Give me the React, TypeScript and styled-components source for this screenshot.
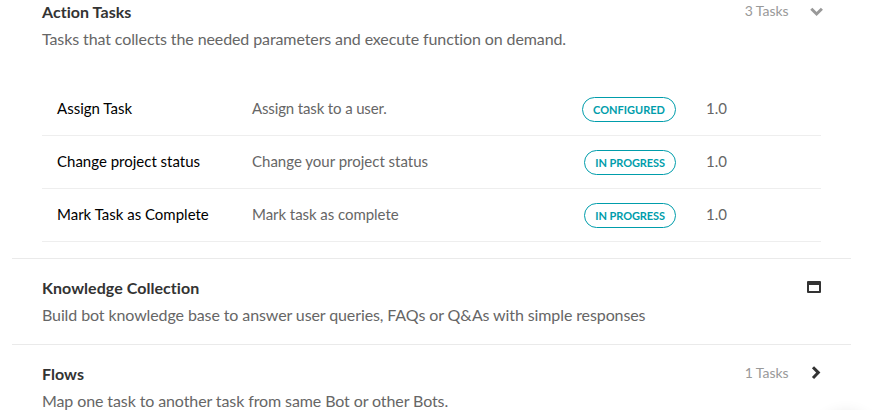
import React from "react";
import styled, { createGlobalStyle } from "styled-components";

const GlobalStyle = createGlobalStyle`
  * { box-sizing: border-box; }
  html, body { margin: 0; background: #fff; }
  body {
    font-family: Lato, sans-serif;
    font-variant-ligatures: none;
    overflow: hidden;
  }
`;

const Page = styled.main`
  position: relative;
  width: 893px;
  height: 410px;
  overflow: hidden;
  background: #fff;
`;

const SectionList = styled.div`
  width: 839px;
  margin: -18px 0 0 12px;
`;

const Section = styled.section`
  padding: 0 30px;
  border-top: 1px solid #eaeaea;
`;

const SectionHead = styled.header`
  display: flex;
  justify-content: space-between;
  height: 85px;
  padding-top: 18px;
`;

const Title = styled.h2`
  margin: 0;
  font-size: 16px;
  line-height: 22px;
  font-weight: 700;
  letter-spacing: 0.05px;
  color: #333;
`;

const Description = styled.p`
  margin: 5px 0 0;
  font-size: 16px;
  line-height: 22px;
  letter-spacing: -0.105px;
  color: #666;
  white-space: nowrap;
`;

const Aside = styled.div`
  display: flex;
  align-items: center;
  justify-content: flex-end;
  height: 20px;
`;

const Count = styled.span`
  margin-right: 12.5px;
  font-size: 14px;
  line-height: 20px;
  letter-spacing: -0.05px;
  color: #999;
`;

const Icon = styled.svg`
  display: block;
  width: 20px;
  height: 20px;
  overflow: visible;
`;

const TaskList = styled.ul`
  margin: 0;
  padding: 15px 0 16px;
  list-style: none;
`;

const TaskRow = styled.li`
  display: grid;
  grid-template-columns: 195px 300px 124px 1fr;
  align-items: center;
  height: 53px;
  padding: 0 0 2px 15px;
  border-bottom: 1px solid #eee;
  font-size: 15px;
  line-height: 20px;
  color: #666;
`;

const TaskName = styled.span`
  color: #000;
`;

const TaskDetail = styled.span<{ $tracking?: number }>`
  letter-spacing: ${(p) => p.$tracking ?? 0}px;
`;

const StatusCell = styled.div`
  display: flex;
  justify-content: flex-end;
`;

const Badge = styled.span<{ $tracking?: number }>`
  height: 25px;
  margin-top: 3px;
  padding: 0 10px;
  border: 1px solid #009dab;
  border-radius: 13px;
  font-size: 11px;
  line-height: 24px;
  font-weight: 700;
  letter-spacing: ${(p) => p.$tracking ?? 0}px;
  color: #009dab;
  white-space: nowrap;
`;

const Version = styled.span`
  padding-left: 30px;
`;

const FloatingShadow = styled.div`
  position: absolute;
  left: 818px;
  top: 414px;
  width: 56px;
  height: 56px;
  border-radius: 50%;
  box-shadow: 0 0 16px rgba(0, 0, 0, 0.12);
`;

type IconKind = "down" | "window" | "right";

function SectionIcon({ kind }: { kind: IconKind }) {
  return (
    <Icon viewBox="0 0 20 20" aria-hidden="true">
      {kind === "down" && (
        <path d="M10.3 7.8L15.6 13L20.9 7.8" fill="none" stroke="#999" strokeWidth="3" />
      )}
      {kind === "window" && (
        <path
          fillRule="evenodd"
          fill="#333"
          d="M7 4h12a1 1 0 0 1 1 1v10a1 1 0 0 1-1 1H7a1 1 0 0 1-1-1V5a1 1 0 0 1 1-1zM8 8v6h10V8z"
        />
      )}
      {kind === "right" && (
        <path d="M12 4.2L17.3 9.6L12 15" fill="none" stroke="#333" strokeWidth="3" />
      )}
    </Icon>
  );
}

interface Task {
  name: string;
  detail: string;
  detailTracking?: number;
  status: string;
  version: string;
}

interface SectionData {
  title: string;
  description: string;
  count?: string;
  icon: IconKind;
  tasks?: Task[];
}

const sections: SectionData[] = [
  {
    title: "Action Tasks",
    description: "Tasks that collects the needed parameters and execute function on demand.",
    count: "3 Tasks",
    icon: "down",
    tasks: [
      { name: "Assign Task", detail: "Assign task to a user.", detailTracking: -0.14, status: "CONFIGURED", version: "1.0" },
      { name: "Change project status", detail: "Change your project status", status: "IN PROGRESS", version: "1.0" },
      { name: "Mark Task as Complete", detail: "Mark task as complete", detailTracking: -0.05, status: "IN PROGRESS", version: "1.0" },
    ],
  },
  {
    title: "Knowledge Collection",
    description: "Build bot knowledge base to answer user queries, FAQs or Q&As with simple responses",
    icon: "window",
  },
  {
    title: "Flows",
    description: "Map one task to another task from same Bot or other Bots.",
    count: "1 Tasks",
    icon: "right",
  },
];

export default function App() {
  return (
    <Page>
      <GlobalStyle />
      <SectionList>
        {sections.map((s) => (
          <Section key={s.title}>
            <SectionHead>
              <div>
                <Title>{s.title}</Title>
                <Description>{s.description}</Description>
              </div>
              <Aside>
                {s.count && <Count>{s.count}</Count>}
                <SectionIcon kind={s.icon} />
              </Aside>
            </SectionHead>
            {s.tasks && (
              <TaskList>
                {s.tasks.map((t) => (
                  <TaskRow key={t.name}>
                    <TaskName>{t.name}</TaskName>
                    <TaskDetail $tracking={t.detailTracking}>{t.detail}</TaskDetail>
                    <StatusCell>
                      <Badge $tracking={t.status === "IN PROGRESS" ? -0.08 : 0}>{t.status}</Badge>
                    </StatusCell>
                    <Version>{t.version}</Version>
                  </TaskRow>
                ))}
              </TaskList>
            )}
          </Section>
        ))}
      </SectionList>
      <FloatingShadow />
    </Page>
  );
}
